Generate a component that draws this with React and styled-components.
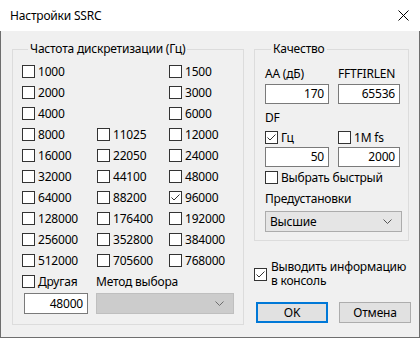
import React from 'react';
import styled, { createGlobalStyle } from 'styled-components';

const GlobalStyle = createGlobalStyle`
  body {
    margin: 0;
    background: #ffffff;
    font-family: "Noto Sans", "Open Sans", sans-serif;
    font-size: 12px;
    letter-spacing: -0.2px;
    color: #000;
  }
`;

const Window = styled.div`
  width: 420px;
  height: 338px;
  box-sizing: border-box;
  display: flex;
  flex-direction: column;
`;

const TitleBar = styled.div`
  height: 31px;
  flex: none;
  display: flex;
  align-items: center;
  justify-content: space-between;
  padding: 0 11px 0 10px;
  background: #ffffff;
`;

const Title = styled.span`
  font-size: 12px;
  line-height: 16px;
`;

const Body = styled.div`
  flex: 1;
  display: flex;
  align-items: flex-start;
  gap: 10px;
  padding: 10px 0 0 11px;
  background: #f0f0f0;
  border: 1px solid #6e6e6e;
  border-top: none;
`;

const Group = styled.fieldset`
  margin: 0;
  box-sizing: border-box;
  width: ${(p) => p.$width}px;
  height: ${(p) => p.$height}px;
  padding: ${(p) => p.$pad};
  border: 1px solid #dcdcdc;
  min-width: 0;
`;

const Legend = styled.legend`
  padding: 0 2px;
  margin-left: 6px;
  line-height: 16px;
  font-size: 12px;
`;

const RateGrid = styled.div`
  display: grid;
  grid-template-columns: 75px 72px 1fr;
  grid-auto-rows: 21px;
`;

const CheckRow = styled.label`
  display: flex;
  align-items: center;
  gap: 3px;
  height: ${(p) => p.$h || 21}px;
  white-space: nowrap;
`;

const Box = styled.span`
  width: 13px;
  height: 13px;
  flex: none;
  box-sizing: border-box;
  border: 1px solid #333333;
  background: #ffffff;
  display: flex;
  align-items: center;
  justify-content: center;
`;

const OtherGrid = styled.div`
  display: grid;
  grid-template-columns: 74px 1fr;
  grid-template-rows: 21px 21px;
  row-gap: 1px;
  align-items: center;
`;

const Caption = styled.div`
  line-height: 16px;
  height: 16px;
  margin-top: ${(p) => p.$mt || 0}px;
  white-space: nowrap;
`;

const Field = styled.div`
  box-sizing: border-box;
  width: ${(p) => p.$w}px;
  height: ${(p) => p.$h || 20}px;
  margin-left: ${(p) => p.$ml || 0}px;
  background: #ffffff;
  border: 1px solid #7a7a7a;
  text-align: right;
  padding-right: 4px;
  line-height: ${(p) => (p.$h || 20) - 2}px;
`;

const Combo = styled.div`
  box-sizing: border-box;
  width: ${(p) => p.$w}px;
  height: 21px;
  display: flex;
  align-items: center;
  justify-content: space-between;
  padding: 0 9px 0 4px;
  background: ${(p) => (p.$disabled ? '#cccccc' : '#e5e5e5')};
  border: 1px solid ${(p) => (p.$disabled ? '#bfbfbf' : '#acacac')};
  margin-top: ${(p) => p.$mt || 0}px;
`;

const PairRow = styled.div`
  display: grid;
  grid-template-columns: 73px 62px;
  align-items: center;
  height: ${(p) => p.$h}px;
  margin-top: ${(p) => p.$mt || 0}px;
`;

const RightColumn = styled.div`
  display: flex;
  flex-direction: column;
`;

const ConsoleCheck = styled.label`
  display: flex;
  align-items: center;
  gap: 4px;
  margin-top: 19px;
  line-height: 14px;
`;

const Buttons = styled.div`
  display: flex;
  gap: 11px;
  margin: 14px 0 0 2px;
`;

const Button = styled.div`
  box-sizing: border-box;
  width: 72px;
  height: 21px;
  display: flex;
  align-items: center;
  justify-content: center;
  background: #e1e1e1;
  border: ${(p) => (p.$default ? '2px solid #0078d7' : '1px solid #adadad')};
`;

const Check = ({ checked }) => (
  <Box>
    {checked && (
      <svg width="11" height="11" viewBox="0 0 11 11">
        <polyline points="1.5,5.5 4,8 9.5,2.5" fill="none" stroke="#333" strokeWidth="1" />
      </svg>
    )}
  </Box>
);

const CheckItem = ({ label, checked, h }) => (
  <CheckRow $h={h}>
    <Check checked={checked} />
    <span>{label}</span>
  </CheckRow>
);

const Chevron = ({ color }) => (
  <svg width="9" height="5" viewBox="0 0 9 5">
    <polyline points="0.5,0.5 4.5,4.5 8.5,0.5" fill="none" stroke={color} strokeWidth="1" />
  </svg>
);

const rates = [
  ['1000', null, '1500'],
  ['2000', null, '3000'],
  ['4000', null, '6000'],
  ['8000', '11025', '12000'],
  ['16000', '22050', '24000'],
  ['32000', '44100', '48000'],
  ['64000', '88200', '96000'],
  ['128000', '176400', '192000'],
  ['256000', '352800', '384000'],
  ['512000', '705600', '768000'],
];

const App = () => {
  return (
    <Window>
      <GlobalStyle />
      <TitleBar>
        <Title>Настройки SSRC</Title>
        <svg width="11" height="11" viewBox="0 0 11 11">
          <path d="M0.5 0.5 L10.5 10.5 M10.5 0.5 L0.5 10.5" stroke="#000" strokeWidth="1" />
        </svg>
      </TitleBar>
      <Body>
        <Group $width={232} $height={284} $pad="4px 9px 8px 9px">
          <Legend>Частота дискретизации (Гц)</Legend>
          <RateGrid>
            {rates.flat().map((r, i) =>
              r ? <CheckItem key={i} label={r} checked={r === '96000'} /> : <span key={i} />
            )}
          </RateGrid>
          <OtherGrid>
            <CheckItem label="Другая" />
            <Caption>Метод выбора</Caption>
            <Field $w={64} $h={21} $ml={2}>48000</Field>
            <Combo $w={138} $disabled>
              <span />
              <Chevron color="#6d6d6d" />
            </Combo>
          </OtherGrid>
        </Group>
        <RightColumn>
          <Group $width={155} $height={200} $pad="9px 9px 8px 10px">
            <Legend>Качество</Legend>
            <PairRow $h={16}>
              <Caption>AA (дБ)</Caption>
              <Caption>FFTFIRLEN</Caption>
            </PairRow>
            <PairRow $h={20} $mt={2}>
              <Field $w={64}>170</Field>
              <Field $w={62}>65536</Field>
            </PairRow>
            <Caption $mt={6}>DF</Caption>
            <PairRow $h={20} $mt={1}>
              <CheckItem label="Гц" checked h={20} />
              <CheckItem label="1M fs" h={20} />
            </PairRow>
            <PairRow $h={20}>
              <Field $w={64}>50</Field>
              <Field $w={62}>2000</Field>
            </PairRow>
            <CheckItem label="Выбрать быстрый" />
            <Caption $mt={3}>Предустановки</Caption>
            <Combo $w={137} $mt={4}>
              <span>Высшие</span>
              <Chevron color="#555" />
            </Combo>
          </Group>
          <ConsoleCheck>
            <Check checked />
            <span>
              Выводить информацию
              <br />в консоль
            </span>
          </ConsoleCheck>
          <Buttons>
            <Button $default>OK</Button>
            <Button>Отмена</Button>
          </Buttons>
        </RightColumn>
      </Body>
    </Window>
  );
};

export default App;
